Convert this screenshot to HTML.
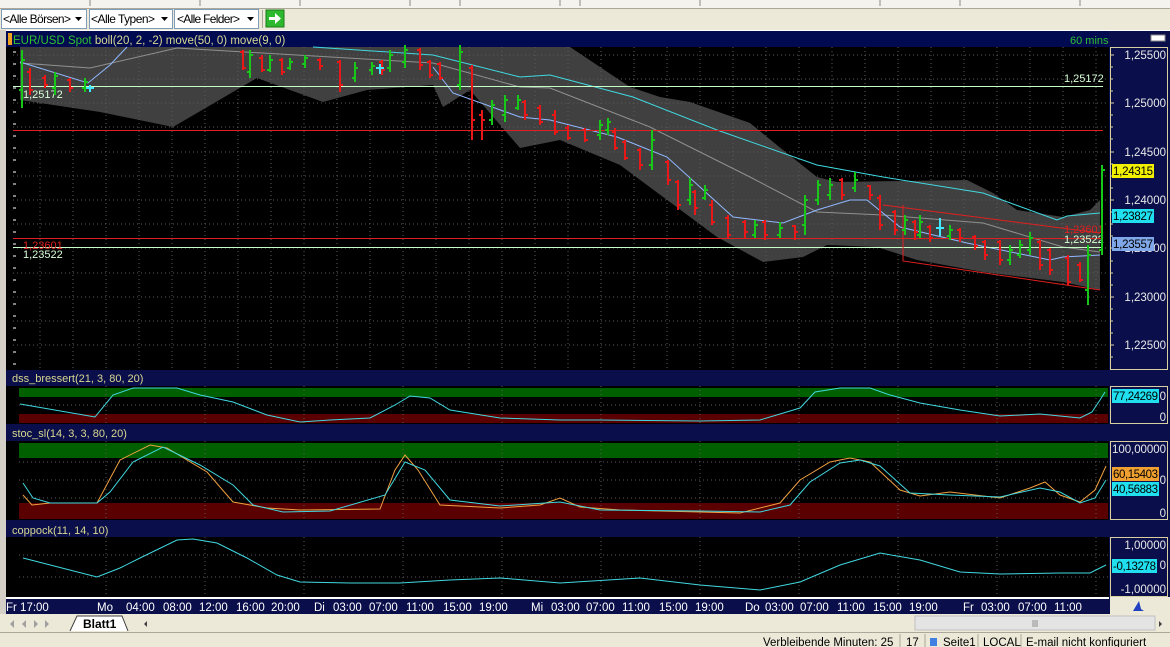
<!DOCTYPE html>
<html><head><meta charset="utf-8"><style>
html,body{margin:0;padding:0;width:1170px;height:647px;overflow:hidden;background:#ece9d8;font-family:"Liberation Sans",sans-serif}
svg{display:block}
</style></head><body>
<svg width="1170" height="647" viewBox="0 0 1170 647" xmlns="http://www.w3.org/2000/svg" font-family="Liberation Sans, sans-serif">
<rect x="0" y="0" width="1170" height="8" fill="#f4f3ee"/>
<g stroke="#888" stroke-width="1"><path d="M90 0V6M200 0V6M300 0V6M410 0V6M460 0V6M560 0V6M580 0V6M700 0V6M880 0V6M960 0V6M1080 0V6"/></g>
<rect x="0" y="8" width="1170" height="22" fill="#ece9d8"/>
<line x1="0" y1="8.5" x2="1170" y2="8.5" stroke="#aca899"/>
<g font-size="12" fill="#000">
<rect x="1.5" y="9.5" width="85" height="19" fill="#fff" stroke="#7f9db9"/><text x="3" y="23" textLength="68">&lt;Alle Börsen&gt;</text><path d="M75 17h7l-3.5 4z"/>
<rect x="89.5" y="9.5" width="83" height="19" fill="#fff" stroke="#7f9db9"/><text x="91" y="23" textLength="64">&lt;Alle Typen&gt;</text><path d="M161 17h7l-3.5 4z"/>
<rect x="174.5" y="9.5" width="84" height="19" fill="#fff" stroke="#7f9db9"/><text x="177" y="23" textLength="63">&lt;Alle Felder&gt;</text><path d="M247 17h7l-3.5 4z"/>
</g>
<line x1="262.5" y1="10" x2="262.5" y2="28" stroke="#aca899"/>
<rect x="266" y="10" width="18" height="17" fill="#2db82d" stroke="#1a7a1a"/>
<path d="M269 17h6v-4l6 5.5-6 5.5v-4h-6z" fill="#fff"/>
<rect x="0" y="30" width="1170" height="584" fill="#0a0e4a"/>
<rect x="0" y="30" width="6" height="584" fill="#d4d0c8"/>
<rect x="6" y="30" width="1164" height="1" fill="#fff"/>
<rect x="6" y="31" width="1103" height="16" fill="#000a50"/>
<rect x="8" y="33" width="4" height="12" fill="#f0a020"/>
<text x="13" y="44" font-size="11.5" fill="#30c030">EUR/USD Spot <tspan fill="#d8d890">boll(20, 2, -2) move(50, 0) move(9, 0)</tspan></text>
<text x="1070" y="44" font-size="11" fill="#30c030">60 mins</text>
<rect x="1151" y="35" width="14" height="6" fill="#fff" stroke="#888"/>
<rect x="6" y="47" width="1103" height="323" fill="#000"/>
<g stroke="#fff" stroke-width="1"><path d="M13 52h3M13 64h3M13 76h3M13 88h3M13 100h3M13 112h3M13 124h3M13 136h3M13 148h3M13 160h3M13 172h3M13 184h3M13 196h3M13 208h3M13 220h3M13 232h3M13 244h3M13 256h3M13 268h3M13 280h3M13 292h3M13 304h3M13 316h3M13 328h3M13 340h3M13 352h3M13 364h3"/></g>
<path d="M20 47L570 47L630 87L660 97L690 102L750 123L783 150L817 177L837 182L967 180L993 193L1017 210L1063 217L1090 210L1100 200L1100 290L1063 282L983 272L917 260L877 247L827 245L803 257L763 262L717 237L620 165L560 140L520 148L470 90L443 107L433 85L367 90L323 102L257 78L173 127L100 112L20 100Z" fill="#404040"/>
<g stroke="#5a5a5a" stroke-dasharray="1,3"><path d="M40 47V370M73 47V370M106 47V370M139 47V370M172 47V370M205 47V370M238 47V370M271 47V370M304 47V370M337 47V370M370 47V370M403 47V370M436 47V370M469 47V370M502 47V370M535 47V370M568 47V370M601 47V370M634 47V370M667 47V370M700 47V370M733 47V370M766 47V370M799 47V370M832 47V370M865 47V370M898 47V370M931 47V370M964 47V370M997 47V370M1030 47V370M1063 47V370M1096 47V370"/>
<path d="M13 55H1108M13 79H1108M13 103H1108M13 127H1108M13 152H1108M13 176H1108M13 200H1108M13 224H1108M13 248H1108M13 273H1108M13 297H1108M13 321H1108M13 345H1108"/></g>
<polyline fill="none" stroke="#909090" points="20,63 90,68 177,48 433,63 520,87 550,88 650,127 750,177 817,212 883,215 983,223 1063,247 1100,252"/>
<polyline fill="none" stroke="#40d8e0" points="313,47 433,55 520,77 550,75 633,97 717,130 817,165 883,177 983,193 1057,220 1067,216 1100,213"/>
<polyline fill="none" stroke="#90b8ff" points="20,62 88,83 110,65 127,47"/>
<polyline fill="none" stroke="#90b8ff" points="433,67 453,93 520,117 550,120 617,137 667,157 733,217 783,223 817,210 850,200 867,200 900,227 967,243 1050,260 1063,257 1100,255"/>
<line x1="13" y1="86.5" x2="1103" y2="86.5" stroke="#c8ffc8"/>
<line x1="13" y1="130.5" x2="1103" y2="130.5" stroke="#e02020"/>
<line x1="13" y1="238.5" x2="1103" y2="238.5" stroke="#e02020"/>
<line x1="13" y1="247.5" x2="1103" y2="247.5" stroke="#c8ffc8"/>
<path d="M883 205L1100 233M903 205V261L1100 290" fill="none" stroke="#e02020"/>
<g font-size="11"><text x="23" y="98" fill="#d8ffd8">1,25172</text><text x="1064" y="82" fill="#d8ffd8">1,25172</text>
<text x="23" y="249" fill="#e02020">1,23601</text><text x="23" y="258" fill="#d8ffd8">1,23522</text>
<text x="1064" y="233" fill="#e02020">1,23601</text><text x="1064" y="243" fill="#d8ffd8">1,23522</text></g>
<path fill="none" stroke="#e81818" stroke-width="2" d="M30 68V95M27 72H30M30 90H33M45 75V88M42 78H45M45 85H48M70 78V92M67 80H70M70 88H73M243 50V70M240 52H243M243 68H246M262 55V72M259 58H262M262 70H265M282 58V75M279 60H282M282 72H285M320 58V70M317 60H320M320 66H323M340 60V92M337 62H340M340 85H343M382 60V75M379 62H382M382 70H385M420 48V70M417 50H420M420 65H423M430 60V78M427 62H430M430 75H433M440 62V80M437 64H440M440 78H443M472 65V140M469 68H472M472 120H475M482 110V140M479 115H482M482 120H485M525 100V120M522 102H525M525 115H528M540 105V125M537 108H540M540 122H543M555 110V135M552 115H555M555 132H558M568 125V140M565 128H568M568 138H571M585 128V142M582 130H585M585 140H588M615 128V150M612 132H615M615 148H618M625 140V160M622 142H625M625 158H628M640 148V170M637 150H640M640 165H643M668 160V185M665 162H668M668 180H671M678 180V210M675 182H678M678 205H681M695 190V215M692 192H695M695 208H698M712 200V225M709 205H712M712 222H715M728 215V238M725 218H728M728 235H731M745 220V238M742 222H745M745 232H748M765 220V240M762 222H765M765 235H768M795 225V240M792 226H795M795 232H798M842 178V200M839 180H842M842 195H845M870 185V200M867 186H870M870 195H873M880 195V230M877 198H880M880 225H883M895 210V235M892 212H895M895 230H898M915 220V240M912 222H915M915 232H918M930 225V242M927 227H930M930 238H933M960 228V242M957 230H960M960 238H963M975 235V250M972 237H975M975 246H978M985 240V260M982 242H985M985 255H988M1000 240V265M997 242H1000M1000 260H1003M1040 240V270M1037 242H1040M1040 265H1043M1050 248V275M1047 250H1050M1050 270H1053M1068 255V285M1065 258H1068M1068 282H1071M1080 262V282M1077 265H1080M1080 280H1083"/>
<path fill="none" stroke="#18c818" stroke-width="2" d="M22 50V108M19 90H22M22 60H25M55 72V95M52 88H55M55 76H58M85 78V92M82 88H85M85 82H88M250 50V78M247 72H250M250 55H253M270 55V72M267 70H270M270 60H273M290 58V70M287 68H290M290 62H293M305 55V68M302 64H305M305 58H308M355 62V82M352 78H355M355 68H358M372 62V75M369 70H372M372 66H375M390 50V72M387 68H390M390 55H393M405 45V68M402 62H405M405 50H408M460 45V90M457 85H460M460 52H463M492 100V125M489 120H492M492 105H495M505 95V122M502 115H505M505 100H508M518 95V110M515 108H518M518 100H521M600 120V140M597 135H600M600 125H603M608 118V135M605 130H608M608 122H611M652 130V170M649 165H652M652 140H655M690 178V205M687 200H690M690 185H693M705 185V200M702 198H705M705 190H708M755 220V238M752 235H755M755 225H758M780 222V238M777 235H780M780 228H783M805 195V235M802 225H805M805 200H808M818 180V205M815 200H818M818 185H821M830 178V200M827 195H830M830 185H833M855 172V192M852 188H855M855 180H858M905 215V235M902 230H905M905 220H908M920 215V238M917 235H920M920 222H923M950 225V240M947 236H950M950 230H953M1010 245V265M1007 260H1010M1010 250H1013M1020 240V258M1017 255H1020M1020 245H1023M1030 232V255M1027 250H1030M1030 238H1033M1088 245V305M1085 290H1088M1088 255H1091M1102 165V255M1099 250H1102M1102 170H1105"/>
<path fill="none" stroke="#40e8ff" stroke-width="2" d="M90 85V92M86 88H94M380 64V74M376 68H384M940 218V236M936 228H944"/>
<rect x="1110.5" y="47.5" width="57" height="322" fill="#0a0e4a" stroke="#d8d0a0"/>
<g stroke="#d8d0a0"><path d="M1110 55h4M1110 67h3M1110 79h3M1110 91h3M1110 103h4M1110 115h3M1110 127h3M1110 139h3M1110 152h4M1110 164h3M1110 176h3M1110 188h3M1110 200h4M1110 212h3M1110 224h3M1110 236h3M1110 248h4M1110 261h3M1110 273h3M1110 285h3M1110 297h4M1110 309h3M1110 321h3M1110 333h3M1110 345h4M1110 357h3"/></g>
<g font-size="11.5" fill="#e8e8e8" text-anchor="end"><text x="1166" y="59">1,25500</text><text x="1166" y="107">1,25000</text><text x="1166" y="156">1,24500</text><text x="1166" y="204">1,24000</text><text x="1166" y="252">1,23500</text><text x="1166" y="301">1,23000</text><text x="1166" y="349">1,22500</text></g>
<g font-size="11.5" fill="#000">
<rect x="1112" y="164" width="42" height="14" fill="#f0f000"/><text x="1113" y="175" textLength="40">1,24315</text>
<rect x="1112" y="209" width="42" height="14" fill="#20e0f0"/><text x="1113" y="220" textLength="40">1,23827</text>
<rect x="1112" y="237" width="42" height="14" fill="#80a8e8"/><text x="1113" y="248" textLength="40">1,23557</text>
</g>
<text x="12" y="382" font-size="11" fill="#d8d890">dss_bressert(21, 3, 80, 20)</text>
<rect x="6" y="386" width="1103" height="38" fill="#000"/>
<rect x="19" y="388" width="1089" height="9" fill="#006000"/>
<rect x="19" y="414" width="1089" height="9" fill="#5a0000"/>
<g stroke="#5a5a5a" stroke-dasharray="1,3"><path d="M19 405H1108M106 386V424M205 386V424M304 386V424M403 386V424M502 386V424M601 386V424M700 386V424M799 386V424M898 386V424M997 386V424M1096 386V424"/></g>
<polyline fill="none" stroke="#40d8e0" points="20,404 95,417 113,395 133,388 177,388 200,395 233,402 267,415 300,422 330,420 370,418 395,405 410,396 430,398 450,410 500,418 560,420 600,420 700,421 760,420 800,408 815,392 840,388 870,388 890,395 920,403 960,410 1000,416 1040,414 1060,416 1080,418 1092,412 1100,400 1105,392"/>
<rect x="1110.5" y="386.5" width="57" height="37" fill="#0a0e4a" stroke="#d8d0a0"/>
<text x="1166" y="400" font-size="11.5" fill="#e8e8e8" text-anchor="end">0</text>
<rect x="1112" y="389" width="47" height="14" fill="#20e0f0"/><text x="1113" y="400" font-size="11.5" fill="#000" textLength="45">77,24269</text>
<text x="1166" y="421" font-size="11.5" fill="#e8e8e8" text-anchor="end">0</text>
<text x="12" y="437" font-size="11" fill="#d8d890">stoc_sl(14, 3, 3, 80, 20)</text>
<rect x="6" y="441" width="1103" height="79" fill="#000"/>
<rect x="19" y="443" width="1089" height="15" fill="#006000"/>
<rect x="19" y="503" width="1089" height="16" fill="#5a0000"/>
<g stroke="#5a5a5a" stroke-dasharray="1,3"><path d="M19 462H1108M19 480H1108M19 498H1108M106 441V520M205 441V520M304 441V520M403 441V520M502 441V520M601 441V520M700 441V520M799 441V520M898 441V520M997 441V520M1096 441V520"/></g>
<polyline fill="none" stroke="#f0a040" points="23,495 32,505 50,503 97,503 120,460 150,445 167,448 207,472 233,502 267,508 300,510 380,509 395,470 405,455 418,470 440,505 500,508 540,505 560,498 580,507 620,510 700,512 740,513 780,503 800,480 830,462 850,458 870,462 900,490 920,496 950,492 1000,498 1030,488 1045,482 1060,495 1080,502 1095,490 1106,466"/>
<polyline fill="none" stroke="#40d8e0" points="23,483 33,498 50,503 97,503 110,492 133,462 163,447 200,465 233,485 253,505 283,512 330,511 385,495 405,462 425,470 450,500 500,506 560,502 600,510 700,511 760,512 790,505 810,482 840,463 860,460 880,466 910,493 950,495 1000,497 1040,488 1060,492 1080,503 1095,498 1106,480"/>
<rect x="1110.5" y="441.5" width="57" height="78" fill="#0a0e4a" stroke="#d8d0a0"/>
<text x="1166" y="453" font-size="11.5" fill="#e8e8e8" text-anchor="end" textLength="54">100,00000</text>
<text x="1166" y="484" font-size="11.5" fill="#e8e8e8" text-anchor="end">0</text>
<rect x="1112" y="467" width="47" height="14" fill="#f0a030"/><text x="1113" y="478" font-size="11.5" fill="#000" textLength="45">60,15403</text>
<rect x="1112" y="482" width="47" height="14" fill="#20e0f0"/><text x="1113" y="493" font-size="11.5" fill="#000" textLength="45">40,56883</text>
<text x="1166" y="517" font-size="11.5" fill="#e8e8e8" text-anchor="end">0</text>
<text x="12" y="534" font-size="11" fill="#d8d890">coppock(11, 14, 10)</text>
<rect x="6" y="537" width="1103" height="60" fill="#000"/>
<g stroke="#5a5a5a" stroke-dasharray="1,3"><path d="M19 555H1108M19 577H1108M106 537V597M205 537V597M304 537V597M403 537V597M502 537V597M601 537V597M700 537V597M799 537V597M898 537V597M997 537V597M1096 537V597"/></g>
<polyline fill="none" stroke="#40d8e0" points="23,558 97,577 120,568 140,558 177,540 193,539 217,543 247,558 277,575 300,582 350,583 400,583 450,580 500,578 560,583 640,578 700,585 760,590 800,582 840,565 880,553 920,560 960,572 1000,574 1060,573 1090,573 1106,565"/>
<rect x="1110.5" y="537.5" width="57" height="59" fill="#0a0e4a" stroke="#d8d0a0"/>
<text x="1166" y="549" font-size="11.5" fill="#e8e8e8" text-anchor="end">1,00000</text>
<text x="1166" y="569" font-size="11.5" fill="#e8e8e8" text-anchor="end">0</text>
<rect x="1112" y="559" width="45" height="14" fill="#20e0f0"/><text x="1113" y="570" font-size="11.5" fill="#000" textLength="43">-0,13278</text>
<text x="1166" y="593" font-size="11.5" fill="#e8e8e8" text-anchor="end">-1,00000</text>
<rect x="6" y="597" width="1103" height="2" fill="#fff"/>
<g font-size="11.5" fill="#fff"><text x="6" y="611">Fr  17:00</text><text x="97" y="611">Mo</text><text x="126" y="611">04:00</text><text x="163" y="611">08:00</text><text x="199" y="611">12:00</text><text x="236" y="611">16:00</text><text x="271" y="611">20:00</text><text x="314" y="611">Di</text><text x="333" y="611">03:00</text><text x="369" y="611">07:00</text><text x="406" y="611">11:00</text><text x="443" y="611">15:00</text><text x="479" y="611">19:00</text><text x="531" y="611">Mi</text><text x="551" y="611">03:00</text><text x="586" y="611">07:00</text><text x="622" y="611">11:00</text><text x="659" y="611">15:00</text><text x="695" y="611">19:00</text><text x="745" y="611">Do</text><text x="765" y="611">03:00</text><text x="800" y="611">07:00</text><text x="837" y="611">11:00</text><text x="873" y="611">15:00</text><text x="909" y="611">19:00</text><text x="963" y="611">Fr</text><text x="981" y="611">03:00</text><text x="1018" y="611">07:00</text><text x="1054" y="611">11:00</text></g>
<rect x="1110" y="597" width="60" height="17" fill="#ece9d8"/>
<path d="M1133 611l6-10 2 8 3 2z" fill="#2040c0"/>
<rect x="0" y="614" width="1170" height="18" fill="#ece9d8"/>
<g fill="#a0a0a0"><path d="M10 624l4-4v8zM22 624l4-4v8zM34 620l4 4-4 4zM45 620l4 4-4 4z"/></g>
<path d="M70 631L77 616H122L128 631" fill="#fff" stroke="#404040"/>
<text x="83" y="628" font-size="12" font-weight="bold" fill="#000">Blatt1</text>
<path d="M144 624l3-3v6z" fill="#404040"/>
<rect x="915" y="616" width="240" height="14" fill="#e4e4e4" stroke="#c0c0c0"/>
<path d="M1033 620v7M1035 620v7M1037 620v7" stroke="#909090"/>
<path d="M1159 621l3 3-3 3z" fill="#404040"/>
<rect x="0" y="632" width="1170" height="15" fill="#ece9d8"/>
<line x1="0" y1="632.5" x2="1170" y2="632.5" stroke="#aca899"/>
<g font-size="11.5" fill="#000"><text x="763" y="646">Verbleibende Minuten: 25</text><text x="906" y="646">17</text><rect x="930" y="638" width="7" height="8" fill="#4080e0"/><text x="943" y="646">Seite1</text><text x="983" y="646">LOCAL</text><text x="1026" y="646">E-mail nicht konfiguriert</text></g>
<path d="M900 634v13M925 634v13M978 634v13M1021 634v13" stroke="#aca899"/>
</svg>
</body></html>
